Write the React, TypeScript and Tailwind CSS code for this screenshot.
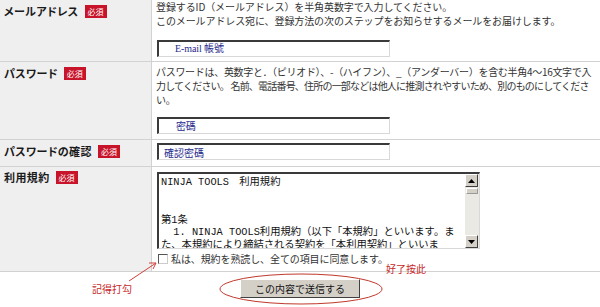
const jp = "font-['Noto_Sans_CJK_JP','Noto_Sans',sans-serif]";

function Badge() {
  return (
    <span className="inline-block h-[13px] bg-[#c8142a] px-[3px] text-[8px] leading-[13px] font-normal text-white">必須</span>
  );
}

function Label({ text }: { text: string }) {
  return (
    <div className="flex h-[14px] items-center gap-[6px] pl-[4px]">
      <span className="text-[11px] leading-[14px] font-bold tracking-[0.4px] text-[#1a1a1a] [font-feature-settings:'palt']">{text}</span>
      <Badge />
    </div>
  );
}

function Field({ children, indent }: { children: React.ReactNode; indent: string }) {
  return (
    <div
      className={`flex h-[17px] w-[233px] items-center border-t-2 border-l-2 border-r border-b border-t-[#3a3a3a] border-l-[#3a3a3a] border-r-[#d8d8d8] border-b-[#d8d8d8] bg-white ${indent} text-[10px] text-[#1f2a8c]`}
    >
      {children}
    </div>
  );
}

function Arrow({ dir }: { dir: 'up' | 'down' }) {
  return (
    <div className="flex h-[13px] w-[13px] items-center justify-center border border-t-white border-l-white border-r-[#404040] border-b-[#404040] bg-[#d4d0c8]">
      <svg width="7" height="4" viewBox="0 0 7 4">
        {dir === 'up' ? <polygon points="3.5,0 7,4 0,4" fill="#000" /> : <polygon points="0,0 7,0 3.5,4" fill="#000" />}
      </svg>
    </div>
  );
}

export default function App() {
  return (
    <div className={`relative h-[307px] w-[600px] overflow-hidden bg-white text-[#333] ${jp}`}>
      {/* row 1 */}
      <div className="grid h-[62px] grid-cols-[152px_1fr] border-b border-[#d2d2d2]">
        <div className="border-r border-[#d2d2d2] bg-[#efefef] pt-[4px]">
          <Label text="メールアドレス" />
        </div>
        <div className="pl-[4px] pt-[0px] text-[10px] leading-[14px] tracking-[-0.1px] whitespace-nowrap">
          <div>登録するID（メールアドレス）を半角英数字で入力してください。</div>
          <div>このメールアドレス宛に、登録方法の次のステップをお知らせするメールをお届けします。</div>
          <div className="mt-[12px] pl-[1px]">
            <Field indent="pl-[16px]">
              <span className="font-['Liberation_Serif','Noto_Sans_CJK_TC',serif]">E-mail 帳號</span>
            </Field>
          </div>
        </div>
      </div>

      {/* row 2 */}
      <div className="grid h-[78px] grid-cols-[152px_1fr] border-b border-[#d2d2d2]">
        <div className="border-r border-[#d2d2d2] bg-[#efefef] pt-[4px]">
          <Label text="パスワード" />
        </div>
        <div className="overflow-hidden pl-[4px] pt-[3px] text-[10px] leading-[14px] tracking-[-0.3px] whitespace-nowrap">
          <div>パスワードは、英数字と．（ピリオド）、-（ハイフン）、_（アンダーバー）を含む半角4～16文字で入</div>
          <div className="tracking-[-0.8px]">力してください。 名前、電話番号、住所の一部などは他人に推測されやすいため、別のものにしてくださ</div>
          <div>い。</div>
          <div className="mt-[10px] pl-[1px]">
            <Field indent="pl-[17px]">
              <span className="font-['Noto_Sans_CJK_TC',sans-serif]">密碼</span>
            </Field>
          </div>
        </div>
      </div>

      {/* row 3 */}
      <div className="grid h-[27px] grid-cols-[152px_1fr] border-b border-[#d2d2d2]">
        <div className="border-r border-[#d2d2d2] bg-[#efefef] pt-[4px]">
          <Label text="パスワードの確認" />
        </div>
        <div className="pl-[5px] pt-[3px]">
          <Field indent="pl-[5px]">
            <span className="font-['Noto_Sans_CJK_TC',sans-serif]">確認密碼</span>
          </Field>
        </div>
      </div>

      {/* row 4 */}
      <div className="grid h-[105px] grid-cols-[152px_1fr] border-b border-[#d2d2d2]">
        <div className="border-r border-[#d2d2d2] bg-[#efefef] pt-[3px]">
          <Label text="利用規約" />
        </div>
        <div className="pl-[5px] pt-[5px]">
          <div className="flex h-[77px] w-[323px] border-t-2 border-l-2 border-r border-b border-t-[#3a3a3a] border-l-[#3a3a3a] border-r-[#d8d8d8] border-b-[#d8d8d8] bg-white">
            <div className="flex-1 overflow-hidden pl-[2px] pt-[2px] font-['Liberation_Mono','Noto_Sans_CJK_JP',monospace] text-[10.3px] leading-[12.5px] text-[#111] whitespace-nowrap">
              <div>NINJA TOOLS　利用規約</div>
              <div>&nbsp;</div>
              <div>&nbsp;</div>
              <div>第1条</div>
              <div>&nbsp; 1. NINJA TOOLS利用規約（以下「本規約」といいます。ま</div>
              <div>た、本規約により締結される契約を「本利用契約」といいま</div>
            </div>
            <div className="flex w-[14px] flex-col bg-[#ebe9e4]">
              <Arrow dir="up" />
              <div className="mx-[1px] mt-[1px] h-[6px] border border-t-white border-l-white border-r-[#9a9a9a] border-b-[#9a9a9a] bg-[#d4d0c8]" />
              <div className="flex-1" />
              <Arrow dir="down" />
            </div>
          </div>
          <div className="mt-[3px] flex h-[13px] items-center gap-[3px] pl-[1px]">
            <div className="h-[10px] w-[10px] border-t border-l border-r border-b border-t-[#555] border-l-[#555] border-r-[#ccc] border-b-[#ccc] bg-white" />
            <span className="text-[10px] leading-[13px] tracking-[-0.1px] whitespace-nowrap">私は、規約を熟読し、全ての項目に同意します。</span>
          </div>
        </div>
      </div>

      {/* submit */}
      <div className="flex justify-center pt-[7px]">
        <button className="h-[19px] w-[120px] border border-t-white border-l-white border-r-[#404040] border-b-[#404040] bg-[#d4d0c8] text-[10px] leading-[17px] text-[#111]">
          この内容で送信する
        </button>
      </div>

      {/* red annotations */}
      <svg className="absolute left-0 top-0" width="600" height="307" viewBox="0 0 600 307">
        <ellipse cx="301" cy="289" rx="81" ry="15" fill="none" stroke="#c0392b" strokeWidth="1" />
        <line x1="129" y1="281" x2="156" y2="263" stroke="#d0403a" strokeWidth="1" />
        <polyline points="149,263 156,263 153,269" fill="none" stroke="#d0403a" strokeWidth="1" />
      </svg>
      <span className="absolute left-[386px] top-[262px] text-[10px] leading-[13px] text-[#c62828]">好了按此</span>
      <span className="absolute left-[92px] top-[282px] text-[10px] leading-[13px] text-[#c62828]">記得打勾</span>
    </div>
  );
}
